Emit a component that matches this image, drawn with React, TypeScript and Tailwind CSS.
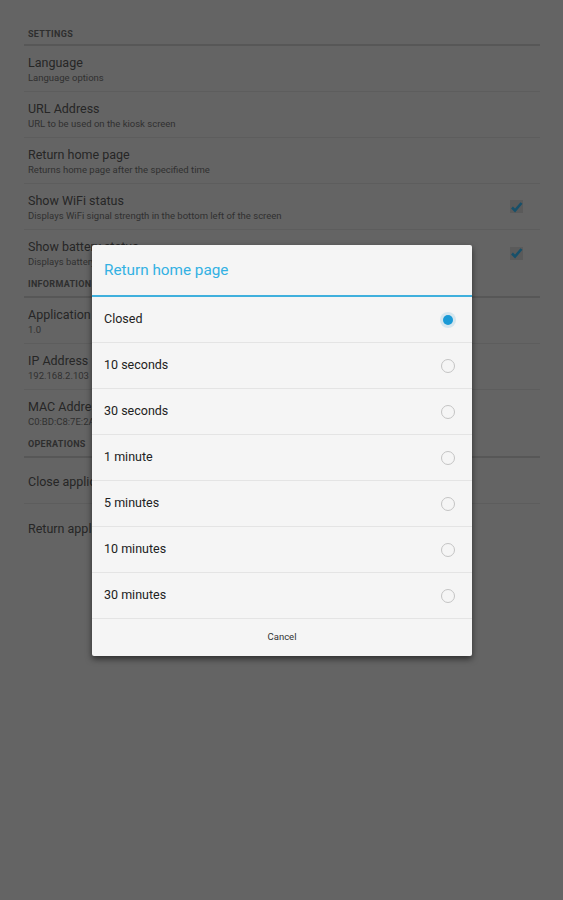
import { useState } from "react";

type Pref = { title: string; summary?: string; checked?: boolean };
type Section = { header: string; items: Pref[] };

const sections: Section[] = [
  {
    header: "Settings",
    items: [
      { title: "Language", summary: "Language options" },
      { title: "URL Address", summary: "URL to be used on the kiosk screen" },
      { title: "Return home page", summary: "Returns home page after the specified time" },
      { title: "Show WiFi status", summary: "Displays WiFi signal strength in the bottom left of the screen", checked: true },
      { title: "Show battery status", summary: "Displays battery status in the bottom left of the screen", checked: true },
    ],
  },
  {
    header: "Information",
    items: [
      { title: "Application version", summary: "1.0" },
      { title: "IP Address", summary: "192.168.2.103" },
      { title: "MAC Address", summary: "C0:BD:C8:7E:2A:91" },
    ],
  },
  {
    header: "Operations",
    items: [{ title: "Close application" }, { title: "Return application" }],
  },
];

const options = ["Closed", "10 seconds", "30 seconds", "1 minute", "5 minutes", "10 minutes", "30 minutes"];

function CheckBox() {
  return (
    <div className="w-[13px] h-[13px] bg-[#5a5a5a] flex items-center justify-center">
      <svg width="13" height="12" viewBox="0 0 13 12">
        <path d="M2 6.5 L5 9.5 L11.5 2" fill="none" stroke="#17506a" strokeWidth="2.6" />
      </svg>
    </div>
  );
}

function Radio({ on }: { on: boolean }) {
  if (on) {
    return (
      <div className="w-[16px] h-[16px] rounded-full bg-[#d5e6ee] flex items-center justify-center">
        <div className="w-[10px] h-[10px] rounded-full bg-[#1a9ad6]" />
      </div>
    );
  }
  return <div className="w-[14px] h-[14px] rounded-full border-[1.5px] border-[#c4c4c4]" />;
}

export default function App() {
  const [selected, setSelected] = useState("Closed");

  return (
    <div
      className="relative w-[563px] h-[900px] bg-[#646464] overflow-hidden"
      style={{ fontFamily: "Roboto, 'Liberation Sans', sans-serif" }}
    >
      {/* dimmed preference screen */}
      <div className="pt-[22px] pl-[24px] pr-[23px]">
        {sections.map((section, si) => (
          <div key={section.header}>
            <div
              className={`${si === 0 ? "h-[24px] pb-[4px]" : "h-[22px] pb-[6px]"} pl-[4px] flex items-end border-b-2 border-[#575757]`}
            >
              <span className="text-[9px] leading-[12px] font-bold uppercase text-[#2e2e2e] tracking-[0.3px]">
                {section.header}
              </span>
            </div>
            {section.items.map((item, i) => (
              <div
                key={item.title}
                className={`h-[46px] pl-[4px] pr-[17px] flex items-center justify-between ${
                  i < section.items.length - 1 ? "border-b border-[#5d5d5d]" : ""
                }`}
              >
                <div className={item.summary ? "mt-[1px]" : "mt-[2px]"}>
                  <div className="text-[12.5px] leading-[15px] text-[#262626]">{item.title}</div>
                  {item.summary && (
                    <div className="text-[9.5px] leading-[12px] mt-[2px] text-[#303030]">{item.summary}</div>
                  )}
                </div>
                {item.checked && <CheckBox />}
              </div>
            ))}
          </div>
        ))}
      </div>

      {/* dialog */}
      <div className="absolute left-[92px] top-[245px] w-[380px] bg-[#f5f5f5] rounded-[2px] shadow-[0_3px_6px_rgba(0,0,0,0.55)]">
        <div className="h-[52px] pl-[12px] flex items-center border-b-2 border-[#3fb0dd]">
          <span className="text-[15.3px] text-[#33b1e3] mt-[1px]">Return home page</span>
        </div>
        {options.map((opt) => (
          <div
            key={opt}
            onClick={() => setSelected(opt)}
            className="h-[46px] pl-[12px] pr-[16px] flex items-center justify-between border-b border-[#e4e4e4]"
          >
            <span className="text-[12.5px] text-[#222]">{opt}</span>
            <div className="w-[16px] flex justify-center">
              <Radio on={selected === opt} />
            </div>
          </div>
        ))}
        <div className="h-[37px] flex items-center justify-center">
          <span className="text-[9.5px] text-[#333]">Cancel</span>
        </div>
      </div>
    </div>
  );
}
